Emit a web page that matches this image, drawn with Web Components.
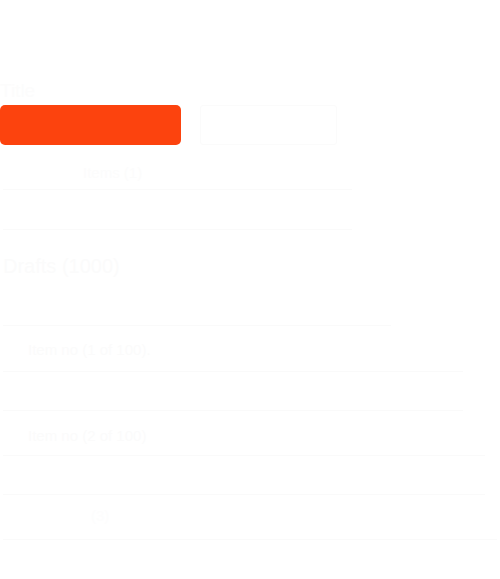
<!DOCTYPE html>
<html lang="en">
<head>
<meta charset="utf-8">
<title>List</title>
<style>
html,body{margin:0;padding:0;background:#fff;}
body{font-family:"Liberation Sans",Arial,sans-serif;}
</style>
</head>
<body>
<x-page>
  <x-title slot="title">Title</x-title>
  <x-actions slot="actions">
    <x-button variant="primary"></x-button>
    <x-button></x-button>
  </x-actions>
  <x-row style="--w:349px;--h:45px;--pl:80px;--pt:18px;--tc:#fcfcfc">Items (1)</x-row>
  <x-row style="--w:349px;--h:40px"></x-row>
  <x-row style="--w:388px;--h:96px;--pl:0px;--pt:26px;--fs:20px;--tc:#fbfbfb">Drafts (1000)</x-row>
  <x-row style="--w:460px;--h:46px;--pl:25px;--pt:14px;--tc:#fbfbfb">Item no (1 of 100).</x-row>
  <x-row style="--w:460px;--h:39px"></x-row>
  <x-row style="--w:482px;--h:45px;--pl:25px;--pt:15px;--tc:#fbfbfb">Item no (2 of 100)</x-row>
  <x-row style="--w:482px;--h:39px"></x-row>
  <x-row style="--w:494px;--h:45px;--pl:88px;--pt:11px;--tc:#fdfdfd">(3)</x-row>
</x-page>
<script>
function define(name, css, html){
  customElements.define(name, class extends HTMLElement{
    constructor(){
      super();
      this.attachShadow({mode:'open'}).innerHTML='<style>'+css+'</style>'+html;
    }
  });
}
define('x-page',
  ':host{display:flex;flex-direction:column;padding-top:76px;font-family:"Liberation Sans",Arial,sans-serif;color:#f4f4f4;width:500px;height:579px;box-sizing:border-box;overflow:hidden}',
  '<slot name="title"></slot><slot name="actions"></slot><slot></slot>');
define('x-title',
  ':host{display:block;font-size:19px;line-height:29px;height:29px;color:#fcfcfc}',
  '<slot></slot>');
define('x-actions',
  ':host{display:flex;gap:19px;height:40px}',
  '<slot></slot>');
define('x-button',
  ':host{display:block;box-sizing:border-box;height:40px;width:137px;background:#fff;border:1px solid #fbfbfb;border-radius:3px}'+
  ':host([variant=primary]){width:181px;background:#fc430e;border:0;border-radius:5px}',
  '<slot></slot>');
define('x-row',
  ':host{display:block;box-sizing:border-box;margin-left:3px;width:var(--w);height:var(--h);padding:var(--pt,0) 0 0 var(--pl,0);border-bottom:1px solid #fafafa;font-size:var(--fs,15px);line-height:20px;color:var(--tc,#fafafa);white-space:nowrap}',
  '<slot></slot>');
</script>
</body>
</html>
